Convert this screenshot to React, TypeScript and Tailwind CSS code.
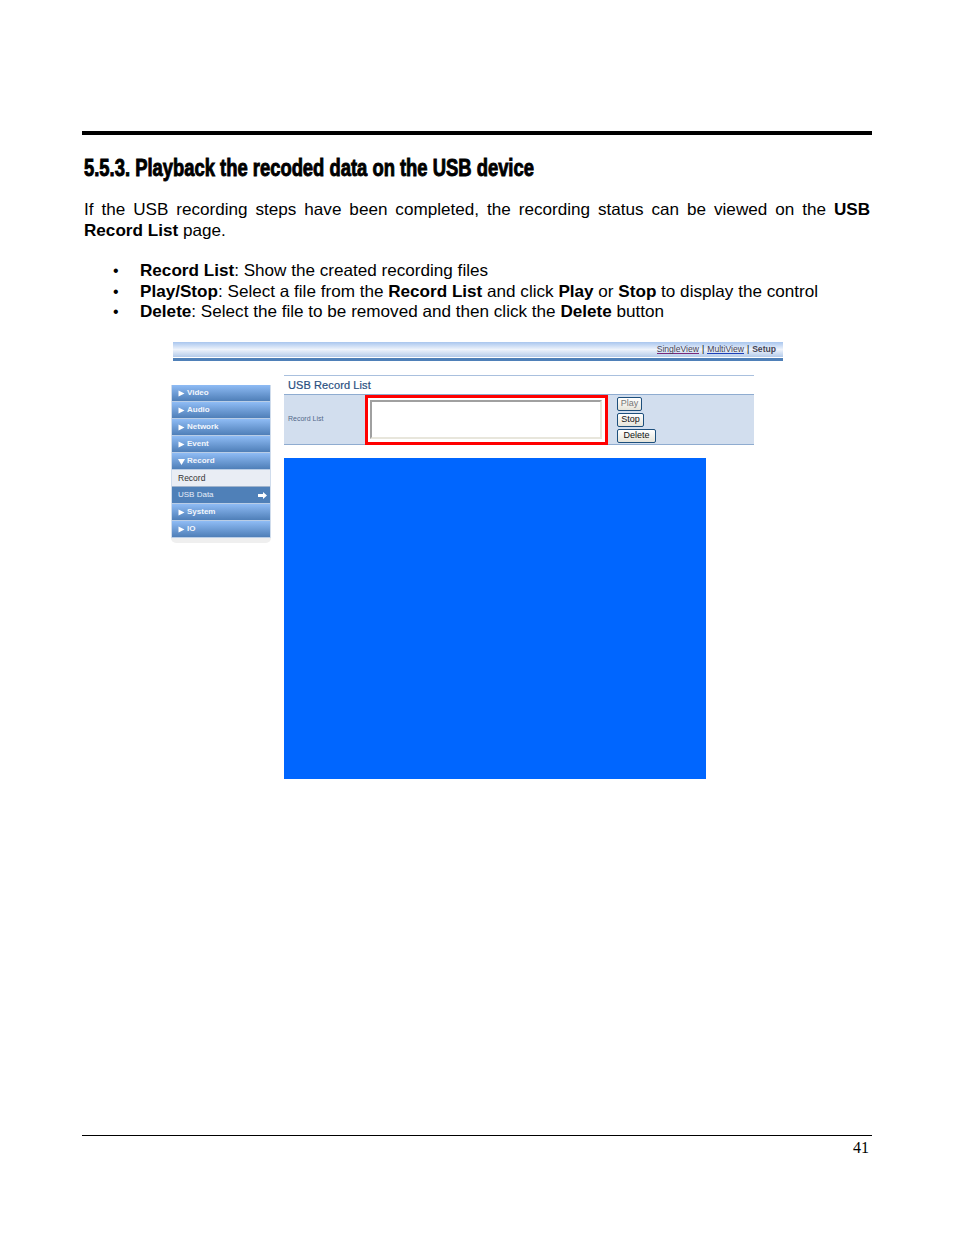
import { ReactNode } from "react";

const menuTop = "flex h-[17px] items-center gap-[2px] pl-[6px] pt-[1px] text-[8px] font-bold text-[#f2f6fc] bg-gradient-to-b from-[#8fbcf5] to-[#4f7fb8] border-b border-[#b9cde6]";

function Caret({ down }: { down?: boolean }) {
  return (
    <svg width="7" height="7" viewBox="0 0 7 7" className="shrink-0">
      {down ? <path d="M0 1h7L3.5 7z" fill="#fff" /> : <path d="M0.5 0.5L6.5 3.5L0.5 6.5z" fill="#fff" />}
    </svg>
  );
}

function MenuItem({ label, down }: { label: string; down?: boolean }) {
  return (
    <div className={menuTop}>
      <Caret down={down} />
      <span>{label}</span>
    </div>
  );
}

function Bullet({ children }: { children: ReactNode }) {
  return (
    <li className="flex h-[20.5px] items-center">
      <span className="w-[28px] pl-[1px] text-[16px]">•</span>
      <span>{children}</span>
    </li>
  );
}

function SmallButton({ label, w, faded }: { label: string; w: string; faded?: boolean }) {
  return (
    <div className={`flex h-[14px] items-center justify-center rounded-[2px] border border-[#1d4f7c] bg-gradient-to-b from-white to-[#e6e4da] text-[9px] ${w} ${faded ? "text-[#777]" : "text-[#111]"}`}>
      {label}
    </div>
  );
}

export default function App() {
  return (
    <div className="flex h-[1235px] w-[954px] flex-col bg-white px-[82px] pt-[131px] font-['Liberation_Sans',Arial,sans-serif] text-[17.13px] leading-[20.5px] text-black">
      <div className="h-[4px] bg-black" />

      <h2 className="ml-[2px] mt-[20px] h-[26px] origin-left scale-x-[0.8] whitespace-nowrap text-[23px] font-bold leading-[26px] [-webkit-text-stroke:0.9px_#000]">
        5.5.3. Playback the recoded data on the USB device
      </h2>

      <p className="mx-[2px] mt-[19px] text-justify">
        If the USB recording steps have been completed, the recording status can be viewed on the <b>USB Record List</b> page.
      </p>

      <ul className="ml-[30px] mt-[20px]">
        <Bullet><b>Record List</b>: Show the created recording files</Bullet>
        <Bullet><b>Play/Stop</b>: Select a file from the <b>Record List</b> and click <b>Play</b> or <b>Stop</b> to display the control</Bullet>
        <Bullet><b>Delete</b>: Select the file to be removed and then click the <b>Delete</b> button</Bullet>
      </ul>

      {/* screenshot of the web ui */}
      <div className="ml-[91px] mt-[19px] w-[610px]">
        <div className="flex h-[15px] items-center justify-end gap-[3px] bg-gradient-to-b from-[#a9c6ee] via-[#eef3fb] to-[#b4cbea] pr-[7px] pt-[1px] text-[8.6px] leading-none text-[#445]">
          <span className="border-b border-[#7a2a7a]">SingleView</span>
          <span className="text-black">|</span>
          <span className="border-b border-[#1c3fb8]">MultiView</span>
          <span className="text-black">|</span>
          <span className="font-bold">Setup</span>
        </div>
        <div className="mt-[1px] h-[3px] bg-[#4f80b8]" />
      </div>

      <div className="ml-[89px] mt-[14px] flex">
        <div className="mt-[10px] h-[158px] w-[100px] rounded-b-[5px] bg-[#efefef]">
          <div className="border-x border-[#cfdcec]">
            <MenuItem label="Video" />
            <MenuItem label="Audio" />
            <MenuItem label="Network" />
            <MenuItem label="Event" />
            <MenuItem label="Record" down />
            <div className="flex h-[17px] items-center border-b border-[#9fb3cc] bg-[#e9edf4] pl-[6px] pt-[1px] text-[8.5px] text-[#333]">Record</div>
            <div className="flex h-[17px] items-center justify-between border-b border-[#b9cde6] bg-[#4f80b8] pl-[6px] pr-[3px] pt-[1px] text-[8px] text-[#e6eef8]">
              <span>USB Data</span>
              <svg width="9" height="7" viewBox="0 0 9 7"><path d="M0 2h5V0l4 3.5L5 7V5H0z" fill="#fff" /></svg>
            </div>
            <MenuItem label="System" />
            <MenuItem label="IO" />
          </div>
        </div>

        <div className="ml-[13px] w-[470px]">
          <div className="flex h-[19px] items-center border-t border-[#a9c0de] pl-[4px] pt-[1px] text-[11px] font-medium leading-none tracking-[0.1px] text-[#2a4f7f] [-webkit-text-stroke:0.2px_#2a4f7f]">
            USB Record List
          </div>
          <div className="flex h-[51px] border-y border-[#8facd0] bg-[#d2deee]">
            <div className="flex w-[81px] items-center pl-[4px] text-[7px] text-[#52688a]">Record List</div>
            <div className="h-[50px] w-[243px] border-[3px] border-[#ff0000] bg-white p-[2px]">
              <div className="h-[39px] w-[232px] border-2 border-b-[#e8e6dc] border-l-[#a0a0a0] border-r-[#e8e6dc] border-t-[#a0a0a0] bg-white" />
            </div>
            <div className="ml-[9px] flex flex-col gap-[2px] pt-[2px]">
              <SmallButton label="Play" w="w-[25px]" faded />
              <SmallButton label="Stop" w="w-[27px]" />
              <SmallButton label="Delete" w="w-[39px]" />
            </div>
          </div>
          <div className="mt-[13px] h-[321px] w-[422px] bg-[#0066ff]" />
        </div>
      </div>

      <div className="flex-1" />
      <div className="h-[1px] bg-black" />
      <div className="mb-[78px] mt-[3px] pr-[3px] text-right font-['Liberation_Serif',serif] text-[16px] leading-[18px]">41</div>
    </div>
  );
}
